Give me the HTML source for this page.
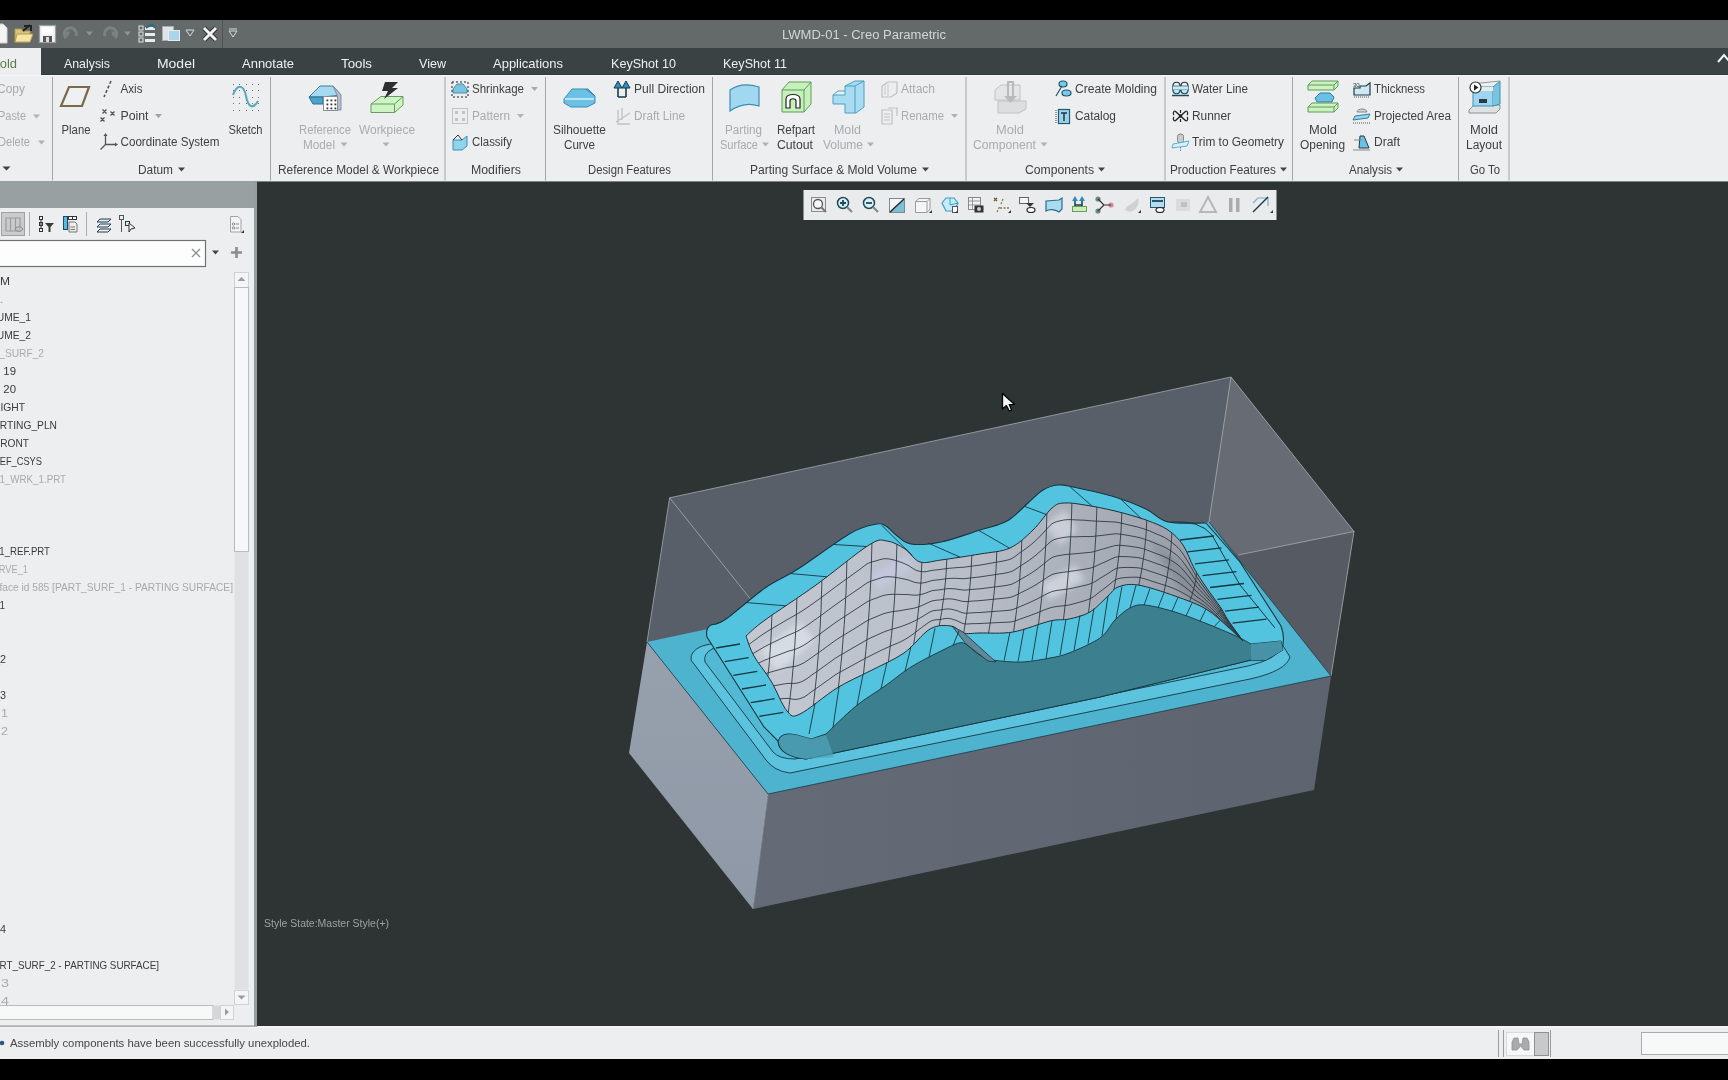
<!DOCTYPE html>
<html><head><meta charset="utf-8"><title>Creo Parametric</title>
<style>
html,body{margin:0;padding:0;background:#000;overflow:hidden;width:1728px;height:1080px}
svg{display:block;will-change:transform}
text{font-family:"Liberation Sans",sans-serif}
</style></head><body>
<svg width="1728" height="1080" viewBox="0 0 1728 1080">
<rect x="0" y="0" width="1728" height="1080" fill="#000" />
<rect x="0" y="20" width="1728" height="28" fill="#646a6a" />
<rect x="0" y="48" width="1728" height="27" fill="#3a4243" />
<rect x="0" y="75" width="1728" height="106" fill="#eceef0" />
<rect x="0" y="74" width="1728" height="1" fill="#323a3b" />
<rect x="0" y="75" width="1728" height="1" fill="#f3f6f6" />
<rect x="257" y="181" width="1471" height="845" fill="#2e3434" />
<rect x="0" y="181" width="1728" height="1" fill="#7d8484" />
<rect x="0" y="181" width="254" height="27" fill="#98a0a1" />
<rect x="0" y="208" width="254" height="818" fill="#eceef0" />
<rect x="254" y="181" width="3" height="845" fill="#969d9e" />
<rect x="0" y="1026" width="1728" height="33" fill="#eceef0" />
<rect x="0" y="1026" width="1728" height="2" fill="#f2f6f6" />
<rect x="0" y="1025.5" width="257" height="1.2" fill="#8d9393" />
<text x="864" y="38.5" font-size="12.5" fill="#d2d6d6" text-anchor="middle" textLength="164" lengthAdjust="spacingAndGlyphs" >LWMD-01 - Creo Parametric</text>
<path d="M-6,24 L3,24 L7,28 L7,43 L-6,43 Z" fill="#f4f4f4" stroke="#cfd2d2" stroke-width="1" />
<path d="M15,29 L21,29 L23,31 L30,31 L30,42 L15,42 Z" fill="#d9c27a" stroke="#b59a4a" stroke-width="1" />
<path d="M17,34 L33,34 L30,42 L15,42 Z" fill="#f3e4a8" stroke="#b59a4a" stroke-width="1" />
<path d="M24,26 L31,26 L31,31" fill="none" stroke="#222" stroke-width="2" />
<path d="M23,31 L30,25" fill="none" stroke="#222" stroke-width="2" />
<rect x="39.5" y="25.5" width="16" height="17" fill="#f2f2f2" stroke="#9a9e9e" stroke-width="1.2"/>
<rect x="42" y="27" width="11" height="7" fill="#ffffff" />
<rect x="43" y="36" width="9" height="6" fill="#555" />
<rect x="46" y="37" width="3" height="5" fill="#ddd" />
<path d="M66,38 A6,6 0 1 1 76,36" fill="none" stroke="#7c8282" stroke-width="3" />
<polygon points="64,33 70,31 68,37" fill="#7c8282" stroke="none" stroke-width="1" />
<polygon points="86.0,31.5 93.0,31.5 89.5,35.5" fill="#8d9393" stroke="none" stroke-width="1" />
<path d="M115,38 A6,6 0 1 0 105,36" fill="none" stroke="#7c8282" stroke-width="3" />
<polygon points="117,33 111,31 113,37" fill="#7c8282" stroke="none" stroke-width="1" />
<polygon points="124.0,31.5 131.0,31.5 127.5,35.5" fill="#8d9393" stroke="none" stroke-width="1" />
<rect x="139" y="26" width="4" height="4" fill="none" stroke="#e0e4e4" stroke-width="1"/>
<rect x="145" y="27" width="10" height="3" fill="#e8ecec" />
<rect x="139" y="32" width="4" height="4" fill="none" stroke="#e0e4e4" stroke-width="1"/>
<rect x="145" y="33" width="10" height="3" fill="#e8ecec" />
<rect x="139" y="38" width="4" height="4" fill="none" stroke="#e0e4e4" stroke-width="1"/>
<rect x="145" y="39" width="10" height="3" fill="#e8ecec" />
<path d="M146,28 L152,24 M152,24 L155,28" fill="none" stroke="#1e6d8c" stroke-width="2" />
<rect x="162.5" y="26.5" width="11" height="14" fill="#e0e4e4" stroke="#aab0b0"/>
<rect x="168.5" y="30.5" width="11" height="10" fill="#a9d6ea" stroke="#e8ecec"/>
<polygon points="186,30 194,30 190,36" fill="none" stroke="#d5dada" stroke-width="1" />
<path d="M204,28 L216,40 M216,28 L204,40" fill="none" stroke="#333" stroke-width="5" />
<path d="M204,28 L216,40 M216,28 L204,40" fill="none" stroke="#f4f4f4" stroke-width="3" />
<line x1="222.5" y1="20" x2="222.5" y2="48" stroke="#4e5454" stroke-width="1" />
<polygon points="229,31 237,31 233,37" fill="none" stroke="#d5dada" stroke-width="1" />
<line x1="229" y1="29" x2="237" y2="29" stroke="#d5dada" stroke-width="1" />
<rect x="0" y="48" width="41" height="27" fill="#eceef0" />
<text x="-11" y="67.5" font-size="13" fill="#5b7d47" text-anchor="start" textLength="28" lengthAdjust="spacingAndGlyphs" >Mold</text>
<text x="64" y="67.5" font-size="13" fill="#eef0f0" text-anchor="start" textLength="46" lengthAdjust="spacingAndGlyphs" >Analysis</text>
<text x="157" y="67.5" font-size="13" fill="#eef0f0" text-anchor="start" textLength="38" lengthAdjust="spacingAndGlyphs" >Model</text>
<text x="242" y="67.5" font-size="13" fill="#eef0f0" text-anchor="start" textLength="52" lengthAdjust="spacingAndGlyphs" >Annotate</text>
<text x="341" y="67.5" font-size="13" fill="#eef0f0" text-anchor="start" textLength="31" lengthAdjust="spacingAndGlyphs" >Tools</text>
<text x="419" y="67.5" font-size="13" fill="#eef0f0" text-anchor="start" textLength="27" lengthAdjust="spacingAndGlyphs" >View</text>
<text x="493" y="67.5" font-size="13" fill="#eef0f0" text-anchor="start" textLength="70" lengthAdjust="spacingAndGlyphs" >Applications</text>
<text x="611" y="67.5" font-size="13" fill="#eef0f0" text-anchor="start" textLength="65" lengthAdjust="spacingAndGlyphs" >KeyShot 10</text>
<text x="723" y="67.5" font-size="13" fill="#eef0f0" text-anchor="start" textLength="64" lengthAdjust="spacingAndGlyphs" >KeyShot 11</text>
<path d="M1718,62 L1724,55 L1730,62" fill="none" stroke="#f4f4f4" stroke-width="2" />
<line x1="52.5" y1="77" x2="52.5" y2="180.5" stroke="#a3a7a8" stroke-width="1" />
<line x1="270.5" y1="77" x2="270.5" y2="180.5" stroke="#a3a7a8" stroke-width="1" />
<line x1="445" y1="77" x2="445" y2="180.5" stroke="#a3a7a8" stroke-width="1" />
<line x1="545.5" y1="77" x2="545.5" y2="180.5" stroke="#a3a7a8" stroke-width="1" />
<line x1="712.5" y1="77" x2="712.5" y2="180.5" stroke="#a3a7a8" stroke-width="1" />
<line x1="966" y1="77" x2="966" y2="180.5" stroke="#a3a7a8" stroke-width="1" />
<line x1="1165" y1="77" x2="1165" y2="180.5" stroke="#a3a7a8" stroke-width="1" />
<line x1="1292.5" y1="77" x2="1292.5" y2="180.5" stroke="#a3a7a8" stroke-width="1" />
<line x1="1458.5" y1="77" x2="1458.5" y2="180.5" stroke="#a3a7a8" stroke-width="1" />
<line x1="1509" y1="77" x2="1509" y2="180.5" stroke="#a3a7a8" stroke-width="1" />
<text x="-3" y="93" font-size="12" fill="#a9abac" text-anchor="start" textLength="28" lengthAdjust="spacingAndGlyphs" >Copy</text>
<text x="-2" y="120" font-size="12" fill="#a9abac" text-anchor="start" textLength="28" lengthAdjust="spacingAndGlyphs" >Paste</text>
<polygon points="33.0,114.5 40.0,114.5 36.5,118.5" fill="#b0b2b3" stroke="none" stroke-width="1" />
<text x="-2" y="146" font-size="12" fill="#a9abac" text-anchor="start" textLength="32" lengthAdjust="spacingAndGlyphs" >Delete</text>
<polygon points="38.0,140.5 45.0,140.5 41.5,144.5" fill="#b0b2b3" stroke="none" stroke-width="1" />
<polygon points="2.5,166.5 10.5,166.5 6.5,170.5" fill="#404040" stroke="none" stroke-width="1" />
<polygon points="69,87 89,87 82,106 61,106" fill="#eef0f3" stroke="#7a6a48" stroke-width="2.2" />
<text x="61.5" y="133.5" font-size="12" fill="#404040" text-anchor="start" textLength="29" lengthAdjust="spacingAndGlyphs" >Plane</text>
<path d="M111,81 L104,97" fill="none" stroke="#555" stroke-width="1.6" stroke-dasharray="3,2"/>
<text x="120.5" y="92.5" font-size="12" fill="#404040" text-anchor="start" textLength="22" lengthAdjust="spacingAndGlyphs" >Axis</text>
<path d="M102.5,109.5 l4,4 m0,-4 l-4,4 M110.5,111.5 l4,4 m0,-4 l-4,4 M100.5,117.5 l4,4 m0,-4 l-4,4" fill="none" stroke="#555" stroke-width="1.3" />
<text x="120.5" y="119.5" font-size="12" fill="#404040" text-anchor="start" textLength="28" lengthAdjust="spacingAndGlyphs" >Point</text>
<polygon points="155.0,114.0 162.0,114.0 158.5,118.0" fill="#9fa1a2" stroke="none" stroke-width="1" />
<path d="M105.5,135 L105.5,144.5 L116,144.5 M105.5,144.5 L100.5,149.5" fill="none" stroke="#555" stroke-width="1.3" />
<polygon points="103.5,136 107.5,136 105.5,133" fill="#555" stroke="none" stroke-width="1" />
<polygon points="115,142.5 115,146.5 118,144.5" fill="#555" stroke="none" stroke-width="1" />
<text x="120.5" y="146" font-size="12" fill="#404040" text-anchor="start" textLength="99" lengthAdjust="spacingAndGlyphs" >Coordinate System</text>
<rect x="233" y="84" width="1" height="1" fill="#707070" />
<rect x="239" y="84" width="1" height="1" fill="#707070" />
<rect x="246" y="84" width="1" height="1" fill="#707070" />
<rect x="252" y="84" width="1" height="1" fill="#707070" />
<rect x="258" y="84" width="1" height="1" fill="#707070" />
<rect x="233" y="90" width="1" height="1" fill="#707070" />
<rect x="239" y="90" width="1" height="1" fill="#707070" />
<rect x="246" y="90" width="1" height="1" fill="#707070" />
<rect x="252" y="90" width="1" height="1" fill="#707070" />
<rect x="258" y="90" width="1" height="1" fill="#707070" />
<rect x="233" y="97" width="1" height="1" fill="#707070" />
<rect x="239" y="97" width="1" height="1" fill="#707070" />
<rect x="246" y="97" width="1" height="1" fill="#707070" />
<rect x="252" y="97" width="1" height="1" fill="#707070" />
<rect x="258" y="97" width="1" height="1" fill="#707070" />
<rect x="233" y="103" width="1" height="1" fill="#707070" />
<rect x="239" y="103" width="1" height="1" fill="#707070" />
<rect x="246" y="103" width="1" height="1" fill="#707070" />
<rect x="252" y="103" width="1" height="1" fill="#707070" />
<rect x="258" y="103" width="1" height="1" fill="#707070" />
<rect x="233" y="110" width="1" height="1" fill="#707070" />
<rect x="239" y="110" width="1" height="1" fill="#707070" />
<rect x="246" y="110" width="1" height="1" fill="#707070" />
<rect x="252" y="110" width="1" height="1" fill="#707070" />
<rect x="258" y="110" width="1" height="1" fill="#707070" />
<path d="M233,95 C238,82 244,86 246,96 C248,107 253,110 258,101" fill="none" stroke="#5aa7b8" stroke-width="2" />
<text x="228.5" y="133.5" font-size="12" fill="#404040" text-anchor="start" textLength="34" lengthAdjust="spacingAndGlyphs" >Sketch</text>
<text x="138" y="173.5" font-size="12" fill="#404040" text-anchor="start" textLength="35" lengthAdjust="spacingAndGlyphs" >Datum</text>
<polygon points="178.0,167.5 185.0,167.5 181.5,171.5" fill="#444" stroke="none" stroke-width="1" />
<path d="M309,97 L320,86 L333,86 L341,95 L323,97 Z" fill="#a6daf0" stroke="#3a7fa0" stroke-width="1" />
<path d="M309,97 L323,97 L323,104 L313,104 Z" fill="#4aa3cc" stroke="#2a6f90" stroke-width="1" />
<path d="M333,86 L341,95 L341,110 L337,110 L337,95 Z" fill="#b9bdd2" stroke="#7a7f99" stroke-width="0.8" />
<rect x="323.5" y="96.5" width="14" height="14" fill="#ffffff" stroke="#8a8f99"/>
<rect x="326.5" y="99.5" width="1.8" height="1.8" fill="#333" />
<rect x="330.5" y="99.5" width="1.8" height="1.8" fill="#333" />
<rect x="334.5" y="99.5" width="1.8" height="1.8" fill="#333" />
<rect x="326.5" y="103.5" width="1.8" height="1.8" fill="#333" />
<rect x="330.5" y="103.5" width="1.8" height="1.8" fill="#333" />
<rect x="334.5" y="103.5" width="1.8" height="1.8" fill="#333" />
<rect x="326.5" y="107.5" width="1.8" height="1.8" fill="#333" />
<rect x="330.5" y="107.5" width="1.8" height="1.8" fill="#333" />
<rect x="334.5" y="107.5" width="1.8" height="1.8" fill="#333" />
<text x="299" y="134" font-size="12" fill="#a9abac" text-anchor="start" textLength="52" lengthAdjust="spacingAndGlyphs" >Reference</text>
<text x="303" y="148.5" font-size="12" fill="#a9abac" text-anchor="start" textLength="32" lengthAdjust="spacingAndGlyphs" >Model</text>
<polygon points="340.5,142.5 347.5,142.5 344,146.5" fill="#b0b2b3" stroke="none" stroke-width="1" />
<path d="M371,104 L381,96.5 L403,96.5 L403,105 L394.5,112.5 L371,112.5 Z" fill="#cdf5c4" stroke="#6a9a60" stroke-width="1" />
<path d="M371,104 L394.5,104 L403,96.5 M394.5,104 L394.5,112.5" fill="none" stroke="#6a9a60" stroke-width="1" />
<polygon points="385,82 398,82 392,88 398,88 384,99 388,91 382,91" fill="#2e2e2e" stroke="none" stroke-width="1" />
<text x="359" y="134" font-size="12" fill="#a9abac" text-anchor="start" textLength="56" lengthAdjust="spacingAndGlyphs" >Workpiece</text>
<polygon points="382.5,142.5 389.5,142.5 386,146.5" fill="#b0b2b3" stroke="none" stroke-width="1" />
<text x="278" y="173.5" font-size="12" fill="#404040" text-anchor="start" textLength="161" lengthAdjust="spacingAndGlyphs" >Reference Model &amp; Workpiece</text>
<path d="M453,89 L457,84 L463,84 L467,89 L467,93 L453,93 Z" fill="#7cc3e0" stroke="#4a8fb0" stroke-width="1" />
<path d="M452,82 L452,97 L468,97 L468,82 Z" fill="none" stroke="#222" stroke-width="1" stroke-dasharray="2,2"/>
<text x="472" y="93" font-size="12" fill="#404040" text-anchor="start" textLength="52" lengthAdjust="spacingAndGlyphs" >Shrinkage</text>
<polygon points="531.0,87.0 538.0,87.0 534.5,91.0" fill="#a8aaab" stroke="none" stroke-width="1" />
<rect x="452.5" y="108.5" width="15" height="15" fill="none" stroke="#c0c2c3"/>
<rect x="455" y="111" width="3" height="3" fill="#c0c2c3" />
<rect x="462" y="111" width="3" height="3" fill="#c0c2c3" />
<rect x="455" y="118" width="3" height="3" fill="#c0c2c3" />
<rect x="462" y="118" width="3" height="3" fill="#c0c2c3" />
<text x="472" y="120" font-size="12" fill="#a9abac" text-anchor="start" textLength="38" lengthAdjust="spacingAndGlyphs" >Pattern</text>
<polygon points="517.0,114.0 524.0,114.0 520.5,118.0" fill="#b0b2b3" stroke="none" stroke-width="1" />
<path d="M453,140 L462,140 L467,136 L467,146 L462,150 L453,150 Z" fill="#8fd3ec" stroke="#3a8fb0" stroke-width="1" />
<path d="M453,140 L458,135 L462,140" fill="none" stroke="#333" stroke-width="1" />
<text x="472" y="146" font-size="12" fill="#404040" text-anchor="start" textLength="40" lengthAdjust="spacingAndGlyphs" >Classify</text>
<text x="471" y="173.5" font-size="12" fill="#404040" text-anchor="start" textLength="50" lengthAdjust="spacingAndGlyphs" >Modifiers</text>
<path d="M564,99 L572,89 L588,89 L595,96 L595,103 L587,107 L571,107 L564,103 Z" fill="#6cc0e3" stroke="#3a8fb5" stroke-width="1" />
<path d="M565,99 L594,99" fill="none" stroke="#b9e4f5" stroke-width="2" />
<path d="M586,89 L595,96" fill="none" stroke="#2a7fa5" stroke-width="1" />
<text x="553" y="134" font-size="12" fill="#404040" text-anchor="start" textLength="53" lengthAdjust="spacingAndGlyphs" >Silhouette</text>
<text x="564" y="148.5" font-size="12" fill="#404040" text-anchor="start" textLength="31" lengthAdjust="spacingAndGlyphs" >Curve</text>
<path d="M618,97 L618,84 M626,97 L626,84 M618,97 L626,97" fill="none" stroke="#1a3a4a" stroke-width="1.6" />
<polygon points="614,88 618,81 622,88" fill="#2a90c0" stroke="#1a3a4a" stroke-width="1" />
<polygon points="622,88 626,81 630,88" fill="#2a90c0" stroke="#1a3a4a" stroke-width="1" />
<text x="634" y="93" font-size="12" fill="#404040" text-anchor="start" textLength="71" lengthAdjust="spacingAndGlyphs" >Pull Direction</text>
<path d="M616,122 L630,113 M618,110 L618,124 L630,124 M622,108 L622,120" fill="none" stroke="#bfc1c2" stroke-width="1.3" />
<text x="634" y="120" font-size="12" fill="#a9abac" text-anchor="start" textLength="51" lengthAdjust="spacingAndGlyphs" >Draft Line</text>
<text x="588" y="173.5" font-size="12" fill="#404040" text-anchor="start" textLength="83" lengthAdjust="spacingAndGlyphs" >Design Features</text>
<path d="M730,90 C740,83 750,84 759,87 L759,106 C750,103 740,104 730,111 Z" fill="#9fd8ef" stroke="#3d8fb5" stroke-width="1.2" />
<text x="725" y="134" font-size="12" fill="#a9abac" text-anchor="start" textLength="37" lengthAdjust="spacingAndGlyphs" >Parting</text>
<text x="720" y="148.5" font-size="12" fill="#a9abac" text-anchor="start" textLength="38" lengthAdjust="spacingAndGlyphs" >Surface</text>
<polygon points="762.0,142.5 769.0,142.5 765.5,146.5" fill="#b0b2b3" stroke="none" stroke-width="1" />
<path d="M782,90 L789,82 L811,82 L811,104 L804,112 L782,112 Z" fill="#c6f0bc" stroke="#5f9a58" stroke-width="1" />
<path d="M782,90 L804,90 L811,82 M804,90 L804,112" fill="none" stroke="#5f9a58" stroke-width="1" />
<path d="M786,108 L786,99 C786,93 800,93 800,99 L800,108 L796,108 L796,101 C796,98 790,98 790,101 L790,108 Z" fill="#ffffff" stroke="#222" stroke-width="1.2" />
<text x="777" y="134" font-size="12" fill="#404040" text-anchor="start" textLength="38" lengthAdjust="spacingAndGlyphs" >Refpart</text>
<text x="777" y="148.5" font-size="12" fill="#404040" text-anchor="start" textLength="36" lengthAdjust="spacingAndGlyphs" >Cutout</text>
<path d="M833,95 L845,95 L845,86 L855,81 L864,81 L864,107 L856,113 L845,113 L845,104 L833,104 Z" fill="#a9dcf0" stroke="#4a9fc5" stroke-width="1" />
<path d="M833,95 L838,91 L845,91 M845,86 L855,86 L864,81 M855,86 L855,113" fill="none" stroke="#4a9fc5" stroke-width="1" />
<text x="834" y="134" font-size="12" fill="#a9abac" text-anchor="start" textLength="27" lengthAdjust="spacingAndGlyphs" >Mold</text>
<text x="823" y="148.5" font-size="12" fill="#a9abac" text-anchor="start" textLength="40" lengthAdjust="spacingAndGlyphs" >Volume</text>
<polygon points="867.0,142.5 874.0,142.5 870.5,146.5" fill="#b0b2b3" stroke="none" stroke-width="1" />
<path d="M882,86 L888,82 L897,82 L897,93 L891,97 L882,97 Z" fill="none" stroke="#bfc1c2" stroke-width="1.2" />
<path d="M885,84 L885,95 M888,84 L888,96" fill="none" stroke="#c9cbcc" stroke-width="1" />
<text x="901" y="93" font-size="12" fill="#a9abac" text-anchor="start" textLength="34" lengthAdjust="spacingAndGlyphs" >Attach</text>
<path d="M882,110 L892,110 L892,124 L882,124 Z M884,114 L890,114 M884,117 L890,117 M884,120 L890,120 M888,108 L897,108 L897,116" fill="none" stroke="#bfc1c2" stroke-width="1.2" />
<text x="901" y="120" font-size="12" fill="#a9abac" text-anchor="start" textLength="43" lengthAdjust="spacingAndGlyphs" >Rename</text>
<polygon points="951.0,114.0 958.0,114.0 954.5,118.0" fill="#b0b2b3" stroke="none" stroke-width="1" />
<text x="750" y="173.5" font-size="12" fill="#404040" text-anchor="start" textLength="167" lengthAdjust="spacingAndGlyphs" >Parting Surface &amp; Mold Volume</text>
<polygon points="922.0,167.5 929.0,167.5 925.5,171.5" fill="#444" stroke="none" stroke-width="1" />
<path d="M995,90 L1001,85 L1020,85 L1020,100 L995,100 Z" fill="#e3e5e6" stroke="#bfc1c2" stroke-width="1" />
<path d="M998,101 L1026,101 L1026,109 L1019,113 L998,113 Z" fill="#dcdedf" stroke="#bfc1c2" stroke-width="1" />
<path d="M1008,97 L1008,82 L1013,82 L1013,97" fill="none" stroke="#b8babb" stroke-width="2" />
<polygon points="1004,96 1017,96 1010.5,103" fill="#b8babb" stroke="none" stroke-width="1" />
<text x="996" y="134" font-size="12" fill="#a9abac" text-anchor="start" textLength="28" lengthAdjust="spacingAndGlyphs" >Mold</text>
<text x="973" y="148.5" font-size="12" fill="#a9abac" text-anchor="start" textLength="63" lengthAdjust="spacingAndGlyphs" >Component</text>
<polygon points="1040.5,142.5 1047.5,142.5 1044,146.5" fill="#b0b2b3" stroke="none" stroke-width="1" />
<path d="M1056,96 L1062,86 M1059,84 C1059,80 1067,80 1067,84 C1067,88 1059,88 1059,84 Z M1062,93 C1062,89 1071,89 1071,93 C1071,97 1062,97 1062,93 Z" fill="#7cc8e6" stroke="#1a5570" stroke-width="1.2" />
<text x="1075" y="93" font-size="12" fill="#404040" text-anchor="start" textLength="82" lengthAdjust="spacingAndGlyphs" >Create Molding</text>
<rect x="1058.5" y="109.5" width="11" height="14" fill="#9fd3ea" stroke="#1f5a78" stroke-width="1.2"/>
<path d="M1061,113 L1067,113 M1064,113 L1064,121" fill="none" stroke="#1f3a4a" stroke-width="1.5" />
<path d="M1056,110 L1056,124" fill="none" stroke="#444" stroke-width="1" stroke-dasharray="1,1"/>
<text x="1075" y="120" font-size="12" fill="#404040" text-anchor="start" textLength="41" lengthAdjust="spacingAndGlyphs" >Catalog</text>
<text x="1025" y="173.5" font-size="12" fill="#404040" text-anchor="start" textLength="69" lengthAdjust="spacingAndGlyphs" >Components</text>
<polygon points="1098.0,167.5 1105.0,167.5 1101.5,171.5" fill="#444" stroke="none" stroke-width="1" />
<path d="M1173,86 C1173,81 1180,81 1180,86 M1181,86 C1181,81 1188,81 1188,86" fill="none" stroke="#333" stroke-width="1.2" />
<rect x="1172.5" y="86" width="16" height="4" fill="#cfe9f3" stroke="#2a6f8f" stroke-width="0.8"/>
<path d="M1173,90 C1173,95 1180,95 1180,90 M1181,90 C1181,95 1188,95 1188,90" fill="#bfe3f0" stroke="#1f4a5a" stroke-width="1.2" />
<line x1="1172" y1="95.5" x2="1189" y2="95.5" stroke="#1f4a5a" stroke-width="1.5" />
<text x="1192" y="93" font-size="12" fill="#404040" text-anchor="start" textLength="56" lengthAdjust="spacingAndGlyphs" >Water Line</text>
<path d="M1175,111 L1186,121 M1186,111 L1175,121" fill="none" stroke="#222" stroke-width="1.4" />
<path d="M1175,111 C1173,111 1173,114 1174,115 M1186,111 C1188,111 1188,114 1187,115 M1175,121 C1173,121 1173,118 1174,117 M1186,121 C1188,121 1188,118 1187,117 M1180.5,110 L1180.5,113 M1180.5,119 L1180.5,122" fill="none" stroke="#222" stroke-width="1.2" />
<circle cx="1180.5" cy="116" r="1.8" fill="#222"/>
<text x="1192" y="120" font-size="12" fill="#404040" text-anchor="start" textLength="39" lengthAdjust="spacingAndGlyphs" >Runner</text>
<rect x="1177.5" y="134" width="6" height="9" rx="2.5" fill="#c9cbcc" stroke="#6f7475" stroke-width="0.8"/>
<path d="M1173,144 L1189,141 L1187,146 L1172,148 Z" fill="#d9eef6" stroke="#3a9fd0" stroke-width="0.8" />
<path d="M1180.5,147 L1180.5,152" fill="none" stroke="#3a9fd0" stroke-width="1" stroke-dasharray="1.5,1"/>
<text x="1192" y="146" font-size="12" fill="#404040" text-anchor="start" textLength="92" lengthAdjust="spacingAndGlyphs" >Trim to Geometry</text>
<text x="1170" y="173.5" font-size="12" fill="#404040" text-anchor="start" textLength="106" lengthAdjust="spacingAndGlyphs" >Production Features</text>
<polygon points="1280.0,167.5 1287.0,167.5 1283.5,171.5" fill="#444" stroke="none" stroke-width="1" />
<path d="M1308,85 L1312,81 L1338,81 L1338,86 L1334,90 L1308,90 Z" fill="#cdf2c2" stroke="#5f9a58" stroke-width="1" />
<path d="M1308,85 L1334,85 L1338,81 M1334,85 L1334,90" fill="none" stroke="#5f9a58" stroke-width="1" />
<path d="M1315,98 L1320,93 L1330,93 L1334,97 L1332,102 L1317,102 Z" fill="#6cc0e3" stroke="#2a7fa5" stroke-width="1" />
<path d="M1308,107 L1312,103 L1338,103 L1338,108 L1334,112 L1308,112 Z" fill="#cdf2c2" stroke="#5f9a58" stroke-width="1" />
<path d="M1308,107 L1334,107 L1338,103 M1334,107 L1334,112" fill="none" stroke="#5f9a58" stroke-width="1" />
<text x="1309" y="134" font-size="12" fill="#404040" text-anchor="start" textLength="28" lengthAdjust="spacingAndGlyphs" >Mold</text>
<text x="1300" y="148.5" font-size="12" fill="#404040" text-anchor="start" textLength="45" lengthAdjust="spacingAndGlyphs" >Opening</text>
<path d="M1354,88 L1354,95 L1370,95 L1370,83 L1366,86 L1360,86 L1360,88 Z" fill="#cfe9f3" stroke="#1f3a4a" stroke-width="1.2" />
<text x="1353" y="87" font-size="6" fill="#1f3a4a" text-anchor="start" >30</text>
<path d="M1354,97 L1370,97" fill="none" stroke="#555" stroke-width="1" stroke-dasharray="1,1"/>
<text x="1374" y="93" font-size="12" fill="#404040" text-anchor="start" textLength="51" lengthAdjust="spacingAndGlyphs" >Thickness</text>
<path d="M1357,112 C1357,108 1367,108 1367,112 Z" fill="#d0d2d3" stroke="#888" stroke-width="1" />
<path d="M1355,116 L1370,114 L1368,118 L1353,120 Z" fill="#9fd3ea" stroke="#2a7fa5" stroke-width="1" />
<path d="M1353,123 L1370,123" fill="none" stroke="#555" stroke-width="1" stroke-dasharray="1,1"/>
<text x="1374" y="120" font-size="12" fill="#404040" text-anchor="start" textLength="77" lengthAdjust="spacingAndGlyphs" >Projected Area</text>
<path d="M1360,136 L1364,136 L1369,148 L1359,148 Z" fill="#6cc0e3" stroke="#1f3a4a" stroke-width="1" />
<path d="M1354,140 L1362,140 M1353,150 L1370,150" fill="none" stroke="#888" stroke-width="1" />
<text x="1374" y="146" font-size="12" fill="#404040" text-anchor="start" textLength="26" lengthAdjust="spacingAndGlyphs" >Draft</text>
<text x="1349" y="173.5" font-size="12" fill="#404040" text-anchor="start" textLength="43" lengthAdjust="spacingAndGlyphs" >Analysis</text>
<polygon points="1396.0,167.5 1403.0,167.5 1399.5,171.5" fill="#444" stroke="none" stroke-width="1" />
<path d="M1469,110 L1474,105 L1500,105 L1500,109 L1496,113 L1469,113 Z" fill="#dfe2e3" stroke="#8a8f90" stroke-width="1" />
<rect x="1473" y="87" width="20" height="19" fill="#9fd6ef" stroke="#3a8fb5"/>
<rect x="1473" y="87" width="20" height="4" fill="#e8eaeb" />
<path d="M1493,87 L1500,81 L1500,104 L1493,106" fill="#7cc3e0" stroke="#3a8fb5" stroke-width="1" />
<rect x="1479" y="99" width="8" height="4" fill="#2a3a4a" />
<path d="M1474,83 L1481,83 L1500,81" fill="none" stroke="#999" stroke-width="1" />
<circle cx="1475.5" cy="87.5" r="5.5" fill="#fff" stroke="#333" stroke-width="1.2"/>
<polygon points="1474,84.5 1474,90.5 1478.5,87.5" fill="#222" stroke="none" stroke-width="1" />
<text x="1470" y="134" font-size="12" fill="#404040" text-anchor="start" textLength="28" lengthAdjust="spacingAndGlyphs" >Mold</text>
<text x="1466" y="148.5" font-size="12" fill="#404040" text-anchor="start" textLength="36" lengthAdjust="spacingAndGlyphs" >Layout</text>
<text x="1470" y="173.5" font-size="12" fill="#404040" text-anchor="start" textLength="30" lengthAdjust="spacingAndGlyphs" >Go To</text>
<rect x="1.5" y="212.5" width="23" height="23" fill="#c9cbcc" stroke="#9fa2a3"/>
<path d="M6,218 L20,218 L20,231 L6,231 Z M10.5,218 L10.5,231 M15.5,218 L15.5,231" fill="none" stroke="#9a9c9d" stroke-width="1.2" />
<path d="M15,229 C17,226 21,226 23,229 C21,232 17,232 15,229 Z" fill="#bfc1c2" stroke="#8a8c8d" stroke-width="1" />
<line x1="29.5" y1="212" x2="29.5" y2="236" stroke="#a9acad" stroke-width="1" />
<rect x="39.5" y="216.5" width="3" height="3" fill="none" stroke="#333" stroke-width="1"/>
<rect x="39.5" y="222.5" width="3" height="3" fill="none" stroke="#333" stroke-width="1"/>
<rect x="39.5" y="228.5" width="3" height="3" fill="none" stroke="#333" stroke-width="1"/>
<line x1="41" y1="220" x2="41" y2="228" stroke="#333" stroke-width="1" />
<polygon points="45,223 54,223 50.5,227 50.5,232 48.5,232 48.5,227" fill="#3a3a3a" stroke="none" stroke-width="1" />
<rect x="63.5" y="216.5" width="4" height="13" fill="#5ab9de" stroke="#1f4a60"/>
<rect x="68.5" y="216.5" width="4" height="3" fill="#fff" stroke="#333"/>
<rect x="72.5" y="216.5" width="4" height="3" fill="#fff" stroke="#333"/>
<path d="M69,222 L75,222 L77,224 L77,232 L69,232 Z" fill="#eee" stroke="#777" stroke-width="1" />
<line x1="70.5" y1="227" x2="75" y2="227" stroke="#777" stroke-width="1" />
<line x1="70.5" y1="229.5" x2="75" y2="229.5" stroke="#777" stroke-width="1" />
<line x1="86.5" y1="212" x2="86.5" y2="236" stroke="#a9acad" stroke-width="1" />
<path d="M97,222 L100,219 L111,219 L108,222 Z" fill="#d8eef5" stroke="#1f3a4a" stroke-width="1" />
<path d="M97,227 L100,224 L111,224 L108,227 Z" fill="#f2f2f2" stroke="#1f3a4a" stroke-width="1" />
<path d="M97,232 L100,229 L111,229 L108,232 Z" fill="#f2f2f2" stroke="#1f3a4a" stroke-width="1" />
<rect x="119.5" y="215.5" width="4" height="4" fill="none" stroke="#555"/>
<line x1="121.5" y1="220" x2="121.5" y2="232" stroke="#555" stroke-width="1" />
<rect x="125.5" y="221.5" width="4" height="4" fill="#d8eef5" stroke="#1f3a4a"/>
<polygon points="129,223 135,228 131,229 129,232" fill="#f4f4f4" stroke="#333" stroke-width="1" />
<path d="M230.5,216.5 L238,216.5 L241,219.5 L241,232 L230.5,232 Z" fill="#f4f4f4" stroke="#a0a2a3" stroke-width="1" />
<circle cx="233.5" cy="224" r="1.2" fill="none" stroke="#777" stroke-width="0.8"/>
<circle cx="233.5" cy="228" r="1.2" fill="none" stroke="#777" stroke-width="0.8"/>
<line x1="235.5" y1="224" x2="239" y2="224" stroke="#888" stroke-width="1" />
<line x1="235.5" y1="228" x2="239" y2="228" stroke="#888" stroke-width="1" />
<polygon points="241,233 244,230 244,233" fill="#333" stroke="none" stroke-width="1" />
<rect x="-1" y="240.5" width="206.5" height="26" fill="#fdfdfd" stroke="#707272" stroke-width="1.2"/>
<path d="M192,249 L200,257 M200,249 L192,257" fill="none" stroke="#8a8c8d" stroke-width="1.3" />
<polygon points="212.0,250.5 219.0,250.5 215.5,254.5" fill="#444" stroke="none" stroke-width="1" />
<path d="M236.5,247 L236.5,258 M231,252.5 L242,252.5" fill="none" stroke="#8a8c8d" stroke-width="2.6" />
<rect x="234.5" y="272.5" width="14" height="717" fill="#dfe1e2" />
<rect x="234.5" y="272.5" width="14" height="15" fill="#f4f5f6" stroke="#cfd1d2"/>
<polygon points="237.5,281 245.5,281 241.5,277" fill="#9a9c9d" stroke="none" stroke-width="1" />
<rect x="234.5" y="287.5" width="14" height="264" fill="#f5f7f8" stroke="#b9bcbd"/>
<rect x="234.5" y="990.5" width="14" height="14" fill="#f4f5f6" stroke="#cfd1d2"/>
<polygon points="237.5,995.5 245.5,995.5 241.5,999.5" fill="#9a9c9d" stroke="none" stroke-width="1" />
<rect x="-1" y="1005.5" width="214" height="14" fill="#f7f8f8" stroke="#b9bcbd"/>
<rect x="213" y="1005.5" width="7" height="14" fill="#d5d8d9" />
<rect x="220.5" y="1005.5" width="13" height="14" fill="#f4f5f6" stroke="#d0d2d3"/>
<polygon points="225,1008.5 225,1015.5 229,1012" fill="#9a9c9d" stroke="none" stroke-width="1" />
<text x="-8" y="285" font-size="10.5" fill="#3a3a3a" text-anchor="start" textLength="18" lengthAdjust="spacingAndGlyphs" >AM</text>
<text x="-1" y="303" font-size="10.5" fill="#a8aaab" text-anchor="start" textLength="5" lengthAdjust="spacingAndGlyphs" >.</text>
<text x="-9" y="321" font-size="10.5" fill="#3a3a3a" text-anchor="start" textLength="40" lengthAdjust="spacingAndGlyphs" >LUME_1</text>
<text x="-9" y="339" font-size="10.5" fill="#3a3a3a" text-anchor="start" textLength="40" lengthAdjust="spacingAndGlyphs" >LUME_2</text>
<text x="-7" y="357" font-size="10.5" fill="#a8aaab" text-anchor="start" textLength="51" lengthAdjust="spacingAndGlyphs" >T_SURF_2</text>
<text x="-3" y="375" font-size="10.5" fill="#3a3a3a" text-anchor="start" textLength="19" lengthAdjust="spacingAndGlyphs" >: 19</text>
<text x="-3" y="393" font-size="10.5" fill="#3a3a3a" text-anchor="start" textLength="19" lengthAdjust="spacingAndGlyphs" >: 20</text>
<text x="-7" y="411" font-size="10.5" fill="#3a3a3a" text-anchor="start" textLength="32" lengthAdjust="spacingAndGlyphs" >RIGHT</text>
<text x="-7" y="429" font-size="10.5" fill="#3a3a3a" text-anchor="start" textLength="64" lengthAdjust="spacingAndGlyphs" >ARTING_PLN</text>
<text x="-6" y="447" font-size="10.5" fill="#3a3a3a" text-anchor="start" textLength="35" lengthAdjust="spacingAndGlyphs" >FRONT</text>
<text x="-7" y="465" font-size="10.5" fill="#3a3a3a" text-anchor="start" textLength="49" lengthAdjust="spacingAndGlyphs" >REF_CSYS</text>
<text x="-6" y="483" font-size="10.5" fill="#a8aaab" text-anchor="start" textLength="72" lengthAdjust="spacingAndGlyphs" >01_WRK_1.PRT</text>
<text x="-6" y="555" font-size="10.5" fill="#3a3a3a" text-anchor="start" textLength="56" lengthAdjust="spacingAndGlyphs" >01_REF.PRT</text>
<text x="-8" y="573" font-size="10.5" fill="#a8aaab" text-anchor="start" textLength="36" lengthAdjust="spacingAndGlyphs" >URVE_1</text>
<text x="-4" y="591" font-size="10.5" fill="#a8aaab" text-anchor="start" textLength="237" lengthAdjust="spacingAndGlyphs" >rface id 585 [PART_SURF_1 - PARTING SURFACE]</text>
<text x="-6" y="609" font-size="10.5" fill="#3a3a3a" text-anchor="start" textLength="11" lengthAdjust="spacingAndGlyphs" >_1</text>
<text x="-6" y="663" font-size="10.5" fill="#3a3a3a" text-anchor="start" textLength="12" lengthAdjust="spacingAndGlyphs" >_2</text>
<text x="-6" y="699" font-size="10.5" fill="#3a3a3a" text-anchor="start" textLength="12" lengthAdjust="spacingAndGlyphs" >_3</text>
<text x="1" y="717" font-size="10.5" fill="#a8aaab" text-anchor="start" textLength="7" lengthAdjust="spacingAndGlyphs" > 1</text>
<text x="1" y="735" font-size="10.5" fill="#a8aaab" text-anchor="start" textLength="7" lengthAdjust="spacingAndGlyphs" > 2</text>
<text x="-6" y="933" font-size="10.5" fill="#3a3a3a" text-anchor="start" textLength="12" lengthAdjust="spacingAndGlyphs" >_4</text>
<text x="-7" y="969" font-size="10.5" fill="#3a3a3a" text-anchor="start" textLength="166" lengthAdjust="spacingAndGlyphs" >ART_SURF_2 - PARTING SURFACE]</text>
<text x="1" y="987" font-size="10.5" fill="#a8aaab" text-anchor="start" textLength="8" lengthAdjust="spacingAndGlyphs" > 3</text>
<text x="1" y="1005" font-size="10.5" fill="#a8aaab" text-anchor="start" textLength="8" lengthAdjust="spacingAndGlyphs" > 4</text>
<circle cx="2" cy="1043" r="2.3" fill="#2a5a75"/>
<text x="10" y="1047" font-size="11" fill="#464646" text-anchor="start" textLength="300" lengthAdjust="spacingAndGlyphs" >Assembly components have been successfully unexploded.</text>
<line x1="1498.5" y1="1030" x2="1498.5" y2="1057" stroke="#9a9c9d" stroke-width="1" />
<line x1="1503.5" y1="1030" x2="1503.5" y2="1057" stroke="#9a9c9d" stroke-width="1" />
<line x1="1550.5" y1="1030" x2="1550.5" y2="1057" stroke="#9a9c9d" stroke-width="1" />
<rect x="1506.5" y="1032.5" width="42" height="23" fill="#f6f7f7" stroke="#d9dbdc"/>
<rect x="1534.5" y="1032.5" width="14" height="23" fill="#c8c9ca" stroke="#8f9192"/>
<path d="M1512,1050 L1512,1042 L1514,1038 L1518,1038 L1519,1044 L1522,1044 L1523,1038 L1527,1038 L1529,1042 L1529,1050 L1524,1050 L1520.5,1046 L1517,1050 Z" fill="#a9abac" stroke="#8f9192" stroke-width="0.8" />
<rect x="1641.5" y="1032.5" width="90" height="22" fill="#f7f8f8" stroke="#a9abac"/>
<text x="264" y="927" font-size="10" fill="#9ba2a2" text-anchor="start" textLength="125" lengthAdjust="spacingAndGlyphs" >Style State:Master Style(+)</text>
<rect x="803.5" y="190" width="473" height="30" fill="#e9ebec" />
<rect x="811.5" y="197.5" width="14" height="14" fill="none" stroke="#8a8c8d"/>
<circle cx="818" cy="204" r="4.5" fill="#f6f8f8" stroke="#555" stroke-width="1.3"/>
<line x1="821" y1="207" x2="826" y2="212" stroke="#777" stroke-width="2" />
<circle cx="843" cy="203" r="5.5" fill="#d8f0f8" stroke="#1f4a5a" stroke-width="1.5"/>
<path d="M840,203 L846,203 M843,200 L843,206" fill="none" stroke="#1f4a5a" stroke-width="1.8" />
<line x1="847" y1="207" x2="852" y2="212" stroke="#888" stroke-width="2.2" />
<circle cx="869" cy="203" r="5.5" fill="#d8f0f8" stroke="#1f4a5a" stroke-width="1.5"/>
<path d="M866,203 L872,203" fill="none" stroke="#1f4a5a" stroke-width="1.8" />
<line x1="873" y1="207" x2="878" y2="212" stroke="#888" stroke-width="2.2" />
<rect x="889.5" y="198.5" width="15" height="14" fill="#f4f6f7" stroke="#7a8a90"/>
<polygon points="890,212 904,199 904,212" fill="#7cc0d8" stroke="none" stroke-width="1" />
<line x1="890" y1="212" x2="904" y2="199" stroke="#222" stroke-width="1.3" />
<path d="M915.5,201.5 L919,198.5 L930,198.5 L930,209 L927,212.5 L915.5,212.5 Z" fill="#f4f5f6" stroke="#9a9c9d" stroke-width="1" />
<path d="M915.5,201.5 L927,201.5 L930,198.5 M927,201.5 L927,212.5" fill="none" stroke="#9a9c9d" stroke-width="1" />
<polygon points="929,213 932,210 932,213" fill="#333" stroke="none" stroke-width="1" />
<path d="M942,203 L946,198 L954,198 L958,203 L954,211 L946,211 Z" fill="#c8ecf7" stroke="#3a9fc5" stroke-width="1.2" />
<path d="M950,198 L950,205 L958,203" fill="none" stroke="#3a9fc5" stroke-width="1" />
<rect x="952.5" y="206.5" width="5" height="6" fill="#fff" stroke="#555"/>
<polygon points="955,213 958,210 958,213" fill="#333" stroke="none" stroke-width="1" />
<rect x="968.5" y="197.5" width="12" height="12" fill="#f2f2f2" stroke="#888"/>
<line x1="969" y1="201" x2="980" y2="201" stroke="#999" stroke-width="1" />
<line x1="969" y1="205" x2="980" y2="205" stroke="#999" stroke-width="1" />
<line x1="972.5" y1="198" x2="972.5" y2="209" stroke="#999" stroke-width="1" />
<rect x="974.5" y="205.5" width="9" height="7" fill="#333" />
<circle cx="979" cy="209" r="2" fill="#ccc"/>
<path d="M994,198 l3,3 m0,-3 l-3,3" fill="none" stroke="#6a5a30" stroke-width="1.2" />
<path d="M997,212 L1000,206 M1001,204 L1003,199 M1000,208 L1006,208 L1009,208" fill="none" stroke="#8a7a40" stroke-width="1.3" stroke-dasharray="2,1.5"/>
<polygon points="1008,213 1011,210 1011,213" fill="#333" stroke="none" stroke-width="1" />
<rect x="1019.5" y="197.5" width="9" height="6" fill="#f4f4f4" stroke="#666"/>
<path d="M1026,203 L1034,203 L1030,207 Z" fill="#333" stroke="none" stroke-width="1" />
<ellipse cx="1031" cy="210" rx="4" ry="2.5" fill="#fff" stroke="#222" stroke-width="1.2"/>
<path d="M1046,201 L1059,200 L1062,198 L1062,209 L1059,212 C1055,209 1049,209 1046,211 Z" fill="#a9dcf0" stroke="#2a6a8a" stroke-width="1.2" />
<rect x="1072.5" y="206.5" width="14" height="5" fill="#c9efb7" stroke="#6a9a60"/>
<path d="M1075,206 L1075,198 M1082,206 L1082,198 M1075,205 L1082,205" fill="none" stroke="#1a3a4a" stroke-width="1.5" />
<polygon points="1072,201 1075,196 1078,201" fill="#2a90c0" stroke="none" stroke-width="1" />
<polygon points="1079,201 1082,196 1085,201" fill="#2a90c0" stroke="none" stroke-width="1" />
<circle cx="1098" cy="199" r="2.6" fill="#6a8a80"/>
<circle cx="1098" cy="211" r="2.6" fill="#6a8a80"/>
<circle cx="1111" cy="205" r="2.6" fill="#d08a9a"/>
<path d="M1098,199 L1104,205 L1098,211 M1104,205 L1111,205" fill="none" stroke="#333" stroke-width="1.2" />
<path d="M1125,210 C1127,204 1133,205 1138,198 C1140,203 1137,210 1130,212 Z" fill="#cfd1d2" stroke="none" stroke-width="1" />
<polygon points="1138,213 1141,210 1141,213" fill="#333" stroke="none" stroke-width="1" />
<rect x="1150.5" y="197.5" width="14" height="10" fill="#b9dcea" stroke="#1f5a78"/>
<rect x="1152" y="200" width="11" height="2" fill="#1f5a78" />
<ellipse cx="1160" cy="210" rx="4" ry="2.5" fill="#fff" stroke="#222" stroke-width="1.2"/>
<rect x="1176" y="199" width="14" height="12" fill="#d9dbdc" />
<rect x="1181" y="202" width="6" height="5" fill="#bfc1c2" />
<path d="M1208,197 L1216,212 L1200,212 Z" fill="none" stroke="#b5b7b8" stroke-width="2" />
<rect x="1229" y="198" width="3.5" height="14" fill="#a9abac" />
<rect x="1236" y="198" width="3.5" height="14" fill="#a9abac" />
<path d="M1253,203 L1258,198 L1268,198 L1268,206" fill="none" stroke="#7ab0c8" stroke-width="1.2" />
<line x1="1253" y1="212" x2="1268" y2="197" stroke="#1f3a4a" stroke-width="1.4" />
<polygon points="1270,213 1273,210 1273,213" fill="#333" stroke="none" stroke-width="1" />
<path d="M1002.5,393.5 L1002.5,409 L1006.4,405.6 L1009.3,411 L1011.6,410 L1009.2,404.6 L1014.6,404.4 Z" fill="#f6f6f6" stroke="#000" stroke-width="1.3" stroke-linejoin="round"/>
<defs>
<linearGradient id="gLeft" x1="0" y1="0" x2="0" y2="1"><stop offset="0" stop-color="#97a1ae"/><stop offset="1" stop-color="#8f98a6"/></linearGradient>
<linearGradient id="gFront" x1="0" y1="0" x2="1" y2="0"><stop offset="0" stop-color="#646a76"/><stop offset="1" stop-color="#5e646f"/></linearGradient>
<linearGradient id="gGrey" x1="0" y1="0" x2="1" y2="0"><stop offset="0" stop-color="#c3c8d2"/><stop offset="0.45" stop-color="#b8bdc7"/><stop offset="0.75" stop-color="#a5aab4"/><stop offset="1" stop-color="#8f949e"/></linearGradient>
<filter id="fb" x="-20%" y="-20%" width="140%" height="140%"><feGaussianBlur stdDeviation="3"/></filter>
</defs>
<polygon points="669.6,497.8 1231,377 1354,531.5 1331,676 768,794 647,642" fill="#595f69" stroke="none" stroke-width="1" />
<polygon points="1231,377 1354,531.5 1238,555 1209,522" fill="#676c74" stroke="none" stroke-width="1" />
<polygon points="788,646 1354,531.5 1331,676 768,794" fill="#565b63" stroke="none" stroke-width="1" />
<polygon points="647,642 768,794 753,909 629,753" fill="url(#gLeft)" stroke="none" stroke-width="1" />
<polygon points="768,794 1331,676 1314,790 753,909" fill="url(#gFront)" stroke="none" stroke-width="1" />
<polygon points="647,642 1209,522 1331,676 768,794" fill="#4eb3cf" stroke="none" stroke-width="1" />
<path d="M669.6,497.8 L1231,377 L1354,531.5 L1331,676 M669.6,497.8 L647,642 M669.6,497.8 L788,646 M1231,377 L1209,522 M1238,555 L1354,531.5" fill="none" stroke="#b4babd" stroke-width="0.9" opacity="0.75"/>
<path d="M647,642 L768,794 L1331,676 L1209,522" fill="none" stroke="#163640" stroke-width="0.9" opacity="0.8"/>
<path d="M768,794 L753,909" fill="none" stroke="#a9b0b8" stroke-width="0.8" opacity="0.6"/>
<path d="M1209,527 L702,646 Q690,651 691,660 L766,760 Q774,771 790,773 L1250,679 Q1286,671 1290,657 Z" fill="#5cc3de" stroke="#163640" stroke-width="0.9"/>
<path d="M1212,536 L712,649 Q703,654 705,662 L773,752 Q779,759 795,759 L1248,666 Q1277,659 1281,648 Z" fill="#52b9d5" stroke="#163640" stroke-width="0.9"/>
<path d="M711.0,625.0 C713.5,624.0 717.0,625.2 726.0,619.0 C735.0,612.8 753.0,596.3 765.0,588.0 C777.0,579.7 783.7,578.2 798.0,569.0 C812.3,559.8 837.8,540.5 851.0,533.0 C864.2,525.5 871.2,525.2 877.0,524.0 C882.8,522.8 882.8,524.2 886.0,526.0 C889.2,527.8 891.8,532.0 896.0,535.0 C900.2,538.0 903.5,542.8 911.0,544.0 C918.5,545.2 929.5,544.3 941.0,542.0 C952.5,539.7 969.0,533.5 980.0,530.0 C991.0,526.5 999.0,525.5 1007.0,521.0 C1015.0,516.5 1022.0,508.2 1028.0,503.0 C1034.0,497.8 1038.0,493.0 1043.0,490.0 C1048.0,487.0 1053.0,485.5 1058.0,485.0 C1063.0,484.5 1063.5,485.0 1073.0,487.0 C1082.5,489.0 1102.8,493.3 1115.0,497.0 C1127.2,500.7 1137.2,504.8 1146.0,509.0 C1154.8,513.2 1158.0,519.7 1168.0,522.0 C1178.0,524.3 1199.7,522.8 1206.0,523.0 L1240,562 L1281,626 Q1286,640 1281,650 L1266,660 L1251,660 L1100,697 L806,759 Q779,756 778,741 L764,727 L707,637 Q705,628 711,625 Z" fill="#53c4e0" stroke="#163640" stroke-width="1.1"/>
<path d="M778,741 Q781,731 797,735 L811,739 L826.0,734.0 C831.0,729.3 846.2,714.0 856.0,706.0 C865.8,698.0 875.8,692.5 885.0,686.0 C894.2,679.5 901.7,672.8 911.0,667.0 C920.3,661.2 933.0,655.0 941.0,651.0 C949.0,647.0 954.7,644.0 959.0,643.0 C963.3,642.0 963.8,643.2 967.0,645.0 C970.2,646.8 973.7,651.5 978.0,654.0 C982.3,656.5 985.7,658.7 993.0,660.0 C1000.3,661.3 1012.5,662.3 1022.0,662.0 C1031.5,661.7 1042.2,659.5 1050.0,658.0 C1057.8,656.5 1060.7,656.3 1069.0,653.0 C1077.3,649.7 1092.3,643.5 1100.0,638.0 C1107.7,632.5 1110.0,625.0 1115.0,620.0 C1120.0,615.0 1125.0,610.5 1130.0,608.0 C1135.0,605.5 1137.5,604.3 1145.0,605.0 C1152.5,605.7 1165.0,609.0 1175.0,612.0 C1185.0,615.0 1194.8,619.0 1205.0,623.0 C1215.2,627.0 1228.3,632.5 1236.0,636.0 C1243.7,639.5 1248.5,642.7 1251.0,644.0 L1281,641 L1283,650 L1266,660 L1251,660 L1100,697 L806,759 Q779,756 778,741 Z" fill="#3c8090" stroke="#163640" stroke-width="0.9"/>
<path d="M1251,644 L1281,641 L1283,650 L1266,660 L1251,660 Z" fill="#4792a6" stroke="none" stroke-width="1" />
<path d="M779,741 Q781,732 797,735 L811,739 L826,735 L834,757 L806,759 Q780,756 779,741 Z" fill="#4fa3b9" opacity="0.75"/>
<clipPath id="cg"><path d="M746.0,636.0 C749.2,633.3 753.3,628.5 765.0,620.0 C776.7,611.5 798.7,597.5 816.0,585.0 C833.3,572.5 857.2,552.3 869.0,545.0 C880.8,537.7 881.0,540.3 887.0,541.0 C893.0,541.7 899.5,545.5 905.0,549.0 C910.5,552.5 914.0,560.2 920.0,562.0 C926.0,563.8 931.0,561.3 941.0,560.0 C951.0,558.7 968.5,556.0 980.0,554.0 C991.5,552.0 1001.2,552.0 1010.0,548.0 C1018.8,544.0 1026.0,536.7 1033.0,530.0 C1040.0,523.3 1046.8,512.5 1052.0,508.0 C1057.2,503.5 1058.5,503.5 1064.0,503.0 C1069.5,502.5 1076.5,503.7 1085.0,505.0 C1093.5,506.3 1104.8,508.5 1115.0,511.0 C1125.2,513.5 1137.2,516.8 1146.0,520.0 C1154.8,523.2 1161.8,525.8 1168.0,530.0 C1174.2,534.2 1178.7,538.7 1183.0,545.0 C1187.3,551.3 1190.2,561.0 1194.0,568.0 C1197.8,575.0 1201.5,580.3 1206.0,587.0 C1210.5,593.7 1217.3,602.5 1221.0,608.0 C1224.7,613.5 1224.3,614.5 1228.0,620.0 C1231.7,625.5 1240.5,637.5 1243.0,641.0 L1243.0,641.0 C1240.5,638.7 1234.2,632.3 1228.0,627.0 C1221.8,621.7 1214.8,614.2 1206.0,609.0 C1197.2,603.8 1186.3,600.0 1175.0,596.0 C1163.7,592.0 1147.5,586.5 1138.0,585.0 C1128.5,583.5 1123.0,585.2 1118.0,587.0 C1113.0,588.8 1112.7,591.8 1108.0,596.0 C1103.3,600.2 1096.5,608.2 1090.0,612.0 C1083.5,615.8 1075.7,617.5 1069.0,619.0 C1062.3,620.5 1059.3,618.8 1050.0,621.0 C1040.7,623.2 1024.7,630.0 1013.0,632.0 C1001.3,634.0 988.3,632.8 980.0,633.0 C971.7,633.2 967.8,634.2 963.0,633.0 C958.2,631.8 956.5,626.7 951.0,626.0 C945.5,625.3 937.8,624.5 930.0,629.0 C922.2,633.5 914.0,646.0 904.0,653.0 C894.0,660.0 881.2,665.2 870.0,671.0 C858.8,676.8 848.7,680.8 837.0,688.0 C825.3,695.2 808.3,710.2 800.0,714.0 C791.7,717.8 791.8,716.5 787.0,711.0 C782.2,705.5 776.5,690.2 771.0,681.0 C765.5,671.8 758.2,663.5 754.0,656.0 C749.8,648.5 747.3,639.3 746.0,636.0 Z"/></clipPath>
<path d="M746.0,636.0 C749.2,633.3 753.3,628.5 765.0,620.0 C776.7,611.5 798.7,597.5 816.0,585.0 C833.3,572.5 857.2,552.3 869.0,545.0 C880.8,537.7 881.0,540.3 887.0,541.0 C893.0,541.7 899.5,545.5 905.0,549.0 C910.5,552.5 914.0,560.2 920.0,562.0 C926.0,563.8 931.0,561.3 941.0,560.0 C951.0,558.7 968.5,556.0 980.0,554.0 C991.5,552.0 1001.2,552.0 1010.0,548.0 C1018.8,544.0 1026.0,536.7 1033.0,530.0 C1040.0,523.3 1046.8,512.5 1052.0,508.0 C1057.2,503.5 1058.5,503.5 1064.0,503.0 C1069.5,502.5 1076.5,503.7 1085.0,505.0 C1093.5,506.3 1104.8,508.5 1115.0,511.0 C1125.2,513.5 1137.2,516.8 1146.0,520.0 C1154.8,523.2 1161.8,525.8 1168.0,530.0 C1174.2,534.2 1178.7,538.7 1183.0,545.0 C1187.3,551.3 1190.2,561.0 1194.0,568.0 C1197.8,575.0 1201.5,580.3 1206.0,587.0 C1210.5,593.7 1217.3,602.5 1221.0,608.0 C1224.7,613.5 1224.3,614.5 1228.0,620.0 C1231.7,625.5 1240.5,637.5 1243.0,641.0 L1243.0,641.0 C1240.5,638.7 1234.2,632.3 1228.0,627.0 C1221.8,621.7 1214.8,614.2 1206.0,609.0 C1197.2,603.8 1186.3,600.0 1175.0,596.0 C1163.7,592.0 1147.5,586.5 1138.0,585.0 C1128.5,583.5 1123.0,585.2 1118.0,587.0 C1113.0,588.8 1112.7,591.8 1108.0,596.0 C1103.3,600.2 1096.5,608.2 1090.0,612.0 C1083.5,615.8 1075.7,617.5 1069.0,619.0 C1062.3,620.5 1059.3,618.8 1050.0,621.0 C1040.7,623.2 1024.7,630.0 1013.0,632.0 C1001.3,634.0 988.3,632.8 980.0,633.0 C971.7,633.2 967.8,634.2 963.0,633.0 C958.2,631.8 956.5,626.7 951.0,626.0 C945.5,625.3 937.8,624.5 930.0,629.0 C922.2,633.5 914.0,646.0 904.0,653.0 C894.0,660.0 881.2,665.2 870.0,671.0 C858.8,676.8 848.7,680.8 837.0,688.0 C825.3,695.2 808.3,710.2 800.0,714.0 C791.7,717.8 791.8,716.5 787.0,711.0 C782.2,705.5 776.5,690.2 771.0,681.0 C765.5,671.8 758.2,663.5 754.0,656.0 C749.8,648.5 747.3,639.3 746.0,636.0 Z" fill="url(#gGrey)"/>
<g clip-path="url(#cg)"><g opacity="0.6" filter="url(#fb)"><path d="M760,650 L800,622 L815,640 L778,672 Z" fill="#e6e9f0"/><path d="M870,575 L905,556 L915,566 L878,590 Z" fill="#c9cbe8"/><path d="M1045,525 L1065,510 L1078,530 L1060,545 Z" fill="#dfe2ea"/><path d="M1040,585 L1075,565 L1085,580 L1050,600 Z" fill="#e3e6ee"/><path d="M1150,540 L1230,600 L1243,641 L1180,590 Z" fill="#7d828c"/></g></g>
<g clip-path="url(#cg)"><path d="M748.0,645.1 C749.3,644.1 753.3,641.2 756.0,639.3 C758.7,637.3 761.3,635.2 764.0,633.5 C766.7,631.7 769.3,630.2 772.0,628.6 C774.7,627.0 777.3,625.5 780.0,623.9 C782.7,622.3 785.3,620.7 788.0,619.2 C790.7,617.7 793.3,616.3 796.0,614.7 C798.7,613.2 801.3,611.5 804.0,609.7 C806.7,608.0 809.3,606.1 812.0,604.2 C814.7,602.4 817.3,600.5 820.0,598.5 C822.7,596.5 825.3,594.5 828.0,592.5 C830.7,590.5 833.3,588.5 836.0,586.5 C838.7,584.6 841.3,582.7 844.0,580.7 C846.7,578.8 849.3,576.9 852.0,575.0 C854.7,573.0 857.3,571.1 860.0,569.2 C862.7,567.3 865.3,564.8 868.0,563.4 C870.7,562.0 873.3,561.6 876.0,560.9 C878.7,560.1 881.3,559.0 884.0,558.7 C886.7,558.5 889.3,558.9 892.0,559.5 C894.7,560.0 897.3,561.0 900.0,561.9 C902.7,562.9 905.3,563.9 908.0,565.3 C910.7,566.7 913.3,569.1 916.0,570.2 C918.7,571.3 921.3,571.8 924.0,571.8 C926.7,571.9 929.3,570.7 932.0,570.4 C934.7,570.0 937.3,569.9 940.0,569.5 C942.7,569.2 945.3,568.7 948.0,568.4 C950.7,568.1 953.3,567.9 956.0,567.7 C958.7,567.5 961.3,567.4 964.0,567.2 C966.7,566.9 969.3,566.5 972.0,566.1 C974.7,565.8 977.3,565.5 980.0,565.1 C982.7,564.6 985.3,564.1 988.0,563.7 C990.7,563.2 993.3,562.7 996.0,562.2 C998.7,561.8 1001.3,561.5 1004.0,560.8 C1006.7,560.2 1009.3,559.8 1012.0,558.4 C1014.7,557.1 1017.3,554.6 1020.0,552.7 C1022.7,550.8 1025.3,549.1 1028.0,547.0 C1030.7,545.0 1033.3,542.8 1036.0,540.3 C1038.7,537.8 1041.3,534.8 1044.0,532.0 C1046.7,529.3 1049.3,525.7 1052.0,523.8 C1054.7,521.9 1057.3,521.5 1060.0,520.8 C1062.7,520.1 1065.3,519.7 1068.0,519.6 C1070.7,519.4 1073.3,519.8 1076.0,519.9 C1078.7,520.0 1081.3,520.0 1084.0,520.2 C1086.7,520.4 1089.3,520.7 1092.0,520.9 C1094.7,521.1 1097.3,521.2 1100.0,521.3 C1102.7,521.4 1105.3,521.6 1108.0,521.7 C1110.7,521.8 1113.3,521.8 1116.0,522.1 C1118.7,522.5 1121.3,523.2 1124.0,523.8 C1126.7,524.4 1129.3,525.0 1132.0,525.7 C1134.7,526.3 1137.3,526.9 1140.0,527.7 C1142.7,528.5 1145.3,529.3 1148.0,530.3 C1150.7,531.3 1153.3,532.6 1156.0,533.8 C1158.7,534.9 1161.3,535.8 1164.0,537.2 C1166.7,538.7 1169.3,540.4 1172.0,542.6 C1174.7,544.7 1177.3,546.6 1180.0,549.9 C1182.7,553.1 1185.3,557.6 1188.0,561.9 C1190.7,566.2 1193.3,571.7 1196.0,575.9 C1198.7,580.1 1201.3,583.6 1204.0,587.2 C1206.7,590.9 1209.3,594.4 1212.0,598.0 C1214.7,601.5 1217.3,604.7 1220.0,608.5 C1222.7,612.4 1225.3,617.1 1228.0,621.0 C1230.7,624.8 1233.3,628.3 1236.0,631.7 C1238.7,635.0 1242.7,639.4 1244.0,641.0 C1245.3,642.6 1244.0,641.0 1244.0,641.0  M748.0,656.6 C749.3,655.8 753.3,653.4 756.0,651.8 C758.7,650.2 761.3,648.5 764.0,647.0 C766.7,645.5 769.3,644.3 772.0,643.0 C774.7,641.7 777.3,640.4 780.0,639.1 C782.7,637.8 785.3,636.4 788.0,635.3 C790.7,634.1 793.3,633.2 796.0,631.9 C798.7,630.6 801.3,629.1 804.0,627.4 C806.7,625.8 809.3,623.8 812.0,621.9 C814.7,620.0 817.3,618.1 820.0,616.2 C822.7,614.3 825.3,612.2 828.0,610.3 C830.7,608.3 833.3,606.3 836.0,604.4 C838.7,602.4 841.3,600.7 844.0,598.8 C846.7,597.0 849.3,595.2 852.0,593.3 C854.7,591.5 857.3,589.7 860.0,587.9 C862.7,586.0 865.3,583.8 868.0,582.4 C870.7,581.0 873.3,580.4 876.0,579.5 C878.7,578.6 881.3,577.5 884.0,577.0 C886.7,576.6 889.3,576.7 892.0,576.9 C894.7,577.1 897.3,577.7 900.0,578.2 C902.7,578.7 905.3,579.2 908.0,579.9 C910.7,580.7 913.3,582.2 916.0,582.7 C918.7,583.2 921.3,583.1 924.0,582.8 C926.7,582.4 929.3,581.1 932.0,580.5 C934.7,580.0 937.3,580.0 940.0,579.7 C942.7,579.3 945.3,578.7 948.0,578.5 C950.7,578.3 953.3,578.3 956.0,578.3 C958.7,578.4 961.3,578.8 964.0,578.7 C966.7,578.6 969.3,578.1 972.0,577.8 C974.7,577.5 977.3,577.3 980.0,576.9 C982.7,576.6 985.3,576.1 988.0,575.7 C990.7,575.3 993.3,574.9 996.0,574.5 C998.7,574.1 1001.3,573.8 1004.0,573.3 C1006.7,572.8 1009.3,572.4 1012.0,571.3 C1014.7,570.1 1017.3,567.9 1020.0,566.2 C1022.7,564.5 1025.3,562.9 1028.0,561.1 C1030.7,559.2 1033.3,557.3 1036.0,555.1 C1038.7,552.9 1041.3,550.3 1044.0,547.9 C1046.7,545.5 1049.3,542.3 1052.0,540.7 C1054.7,539.1 1057.3,538.7 1060.0,538.1 C1062.7,537.5 1065.3,537.2 1068.0,536.9 C1070.7,536.7 1073.3,536.8 1076.0,536.8 C1078.7,536.7 1081.3,536.6 1084.0,536.5 C1086.7,536.5 1089.3,536.7 1092.0,536.5 C1094.7,536.3 1097.3,535.9 1100.0,535.6 C1102.7,535.3 1105.3,535.0 1108.0,534.7 C1110.7,534.4 1113.3,533.8 1116.0,533.8 C1118.7,533.8 1121.3,534.3 1124.0,534.7 C1126.7,535.1 1129.3,535.6 1132.0,536.1 C1134.7,536.6 1137.3,537.1 1140.0,537.8 C1142.7,538.5 1145.3,539.4 1148.0,540.4 C1150.7,541.3 1153.3,542.5 1156.0,543.6 C1158.7,544.7 1161.3,545.6 1164.0,546.9 C1166.7,548.2 1169.3,549.8 1172.0,551.7 C1174.7,553.6 1177.3,555.4 1180.0,558.3 C1182.7,561.1 1185.3,565.0 1188.0,568.8 C1190.7,572.6 1193.3,577.2 1196.0,580.9 C1198.7,584.6 1201.3,587.6 1204.0,590.9 C1206.7,594.2 1209.3,597.5 1212.0,600.8 C1214.7,604.1 1217.3,607.1 1220.0,610.6 C1222.7,614.2 1225.3,618.4 1228.0,622.0 C1230.7,625.6 1233.3,629.0 1236.0,632.1 C1238.7,635.3 1242.7,639.5 1244.0,641.0 C1245.3,642.5 1244.0,641.0 1244.0,641.0  M748.0,668.1 C749.3,667.4 753.3,665.5 756.0,664.3 C758.7,663.0 761.3,661.7 764.0,660.5 C766.7,659.4 769.3,658.4 772.0,657.3 C774.7,656.3 777.3,655.3 780.0,654.3 C782.7,653.3 785.3,652.2 788.0,651.3 C790.7,650.4 793.3,650.1 796.0,649.0 C798.7,648.0 801.3,646.7 804.0,645.1 C806.7,643.6 809.3,641.5 812.0,639.6 C814.7,637.7 817.3,635.8 820.0,633.9 C822.7,632.0 825.3,630.0 828.0,628.0 C830.7,626.1 833.3,624.0 836.0,622.2 C838.7,620.3 841.3,618.6 844.0,616.9 C846.7,615.2 849.3,613.4 852.0,611.7 C854.7,610.0 857.3,608.2 860.0,606.5 C862.7,604.8 865.3,602.7 868.0,601.3 C870.7,599.9 873.3,599.2 876.0,598.2 C878.7,597.2 881.3,596.0 884.0,595.3 C886.7,594.7 889.3,594.5 892.0,594.3 C894.7,594.2 897.3,594.4 900.0,594.4 C902.7,594.5 905.3,594.5 908.0,594.6 C910.7,594.7 913.3,595.4 916.0,595.2 C918.7,595.1 921.3,594.5 924.0,593.7 C926.7,593.0 929.3,591.4 932.0,590.7 C934.7,590.1 937.3,590.1 940.0,589.8 C942.7,589.4 945.3,588.8 948.0,588.6 C950.7,588.5 953.3,588.8 956.0,589.0 C958.7,589.3 961.3,590.1 964.0,590.1 C966.7,590.2 969.3,589.7 972.0,589.4 C974.7,589.2 977.3,589.0 980.0,588.8 C982.7,588.5 985.3,588.1 988.0,587.8 C990.7,587.4 993.3,587.1 996.0,586.8 C998.7,586.4 1001.3,586.2 1004.0,585.8 C1006.7,585.3 1009.3,585.1 1012.0,584.1 C1014.7,583.1 1017.3,581.2 1020.0,579.7 C1022.7,578.2 1025.3,576.7 1028.0,575.1 C1030.7,573.5 1033.3,571.8 1036.0,569.9 C1038.7,568.0 1041.3,565.7 1044.0,563.7 C1046.7,561.6 1049.3,559.0 1052.0,557.6 C1054.7,556.2 1057.3,555.9 1060.0,555.4 C1062.7,554.8 1065.3,554.6 1068.0,554.3 C1070.7,554.0 1073.3,553.9 1076.0,553.7 C1078.7,553.4 1081.3,553.2 1084.0,552.9 C1086.7,552.6 1089.3,552.6 1092.0,552.1 C1094.7,551.6 1097.3,550.6 1100.0,549.8 C1102.7,549.1 1105.3,548.4 1108.0,547.6 C1110.7,546.9 1113.3,545.7 1116.0,545.4 C1118.7,545.1 1121.3,545.4 1124.0,545.6 C1126.7,545.8 1129.3,546.2 1132.0,546.6 C1134.7,547.0 1137.3,547.2 1140.0,547.9 C1142.7,548.5 1145.3,549.5 1148.0,550.4 C1150.7,551.4 1153.3,552.5 1156.0,553.5 C1158.7,554.5 1161.3,555.4 1164.0,556.6 C1166.7,557.8 1169.3,559.2 1172.0,560.9 C1174.7,562.6 1177.3,564.2 1180.0,566.7 C1182.7,569.2 1185.3,572.5 1188.0,575.7 C1190.7,578.9 1193.3,582.8 1196.0,586.0 C1198.7,589.1 1201.3,591.6 1204.0,594.5 C1206.7,597.5 1209.3,600.5 1212.0,603.5 C1214.7,606.6 1217.3,609.4 1220.0,612.7 C1222.7,616.0 1225.3,619.8 1228.0,623.1 C1230.7,626.4 1233.3,629.7 1236.0,632.6 C1238.7,635.6 1242.7,639.6 1244.0,641.0 C1245.3,642.4 1244.0,641.0 1244.0,641.0  M748.0,679.6 C749.3,679.1 753.3,677.7 756.0,676.8 C758.7,675.9 761.3,674.9 764.0,674.0 C766.7,673.2 769.3,672.5 772.0,671.7 C774.7,671.0 777.3,670.2 780.0,669.5 C782.7,668.7 785.3,667.9 788.0,667.4 C790.7,666.8 793.3,666.9 796.0,666.2 C798.7,665.4 801.3,664.3 804.0,662.8 C806.7,661.3 809.3,659.1 812.0,657.3 C814.7,655.4 817.3,653.5 820.0,651.6 C822.7,649.7 825.3,647.7 828.0,645.8 C830.7,643.9 833.3,641.8 836.0,640.0 C838.7,638.2 841.3,636.6 844.0,635.0 C846.7,633.3 849.3,631.7 852.0,630.1 C854.7,628.4 857.3,626.8 860.0,625.2 C862.7,623.5 865.3,621.6 868.0,620.3 C870.7,618.9 873.3,617.9 876.0,616.8 C878.7,615.7 881.3,614.4 884.0,613.6 C886.7,612.8 889.3,612.2 892.0,611.7 C894.7,611.3 897.3,611.1 900.0,610.7 C902.7,610.3 905.3,609.7 908.0,609.2 C910.7,608.8 913.3,608.5 916.0,607.7 C918.7,607.0 921.3,605.8 924.0,604.6 C926.7,603.5 929.3,601.7 932.0,600.9 C934.7,600.1 937.3,600.3 940.0,599.9 C942.7,599.5 945.3,598.8 948.0,598.8 C950.7,598.7 953.3,599.2 956.0,599.7 C958.7,600.2 961.3,601.4 964.0,601.6 C966.7,601.9 969.3,601.3 972.0,601.1 C974.7,600.9 977.3,600.8 980.0,600.6 C982.7,600.4 985.3,600.1 988.0,599.8 C990.7,599.5 993.3,599.3 996.0,599.0 C998.7,598.7 1001.3,598.6 1004.0,598.2 C1006.7,597.9 1009.3,597.8 1012.0,596.9 C1014.7,596.1 1017.3,594.4 1020.0,593.1 C1022.7,591.8 1025.3,590.6 1028.0,589.2 C1030.7,587.8 1033.3,586.3 1036.0,584.7 C1038.7,583.1 1041.3,581.2 1044.0,579.5 C1046.7,577.8 1049.3,575.7 1052.0,574.5 C1054.7,573.4 1057.3,573.2 1060.0,572.7 C1062.7,572.2 1065.3,572.0 1068.0,571.7 C1070.7,571.3 1073.3,570.9 1076.0,570.5 C1078.7,570.1 1081.3,569.8 1084.0,569.3 C1086.7,568.8 1089.3,568.5 1092.0,567.7 C1094.7,566.8 1097.3,565.3 1100.0,564.1 C1102.7,562.9 1105.3,561.8 1108.0,560.6 C1110.7,559.4 1113.3,557.7 1116.0,557.0 C1118.7,556.4 1121.3,556.6 1124.0,556.6 C1126.7,556.6 1129.3,556.8 1132.0,557.0 C1134.7,557.3 1137.3,557.4 1140.0,558.0 C1142.7,558.6 1145.3,559.6 1148.0,560.5 C1150.7,561.4 1153.3,562.4 1156.0,563.4 C1158.7,564.3 1161.3,565.2 1164.0,566.3 C1166.7,567.4 1169.3,568.6 1172.0,570.1 C1174.7,571.5 1177.3,573.0 1180.0,575.1 C1182.7,577.2 1185.3,579.9 1188.0,582.6 C1190.7,585.2 1193.3,588.4 1196.0,591.0 C1198.7,593.6 1201.3,595.6 1204.0,598.2 C1206.7,600.7 1209.3,603.6 1212.0,606.3 C1214.7,609.1 1217.3,611.8 1220.0,614.8 C1222.7,617.7 1225.3,621.1 1228.0,624.1 C1230.7,627.2 1233.3,630.3 1236.0,633.1 C1238.7,635.9 1242.7,639.7 1244.0,641.0 C1245.3,642.3 1244.0,641.0 1244.0,641.0  M748.0,691.1 C749.3,690.8 753.3,689.9 756.0,689.3 C758.7,688.7 761.3,688.1 764.0,687.6 C766.7,687.0 769.3,686.6 772.0,686.1 C774.7,685.6 777.3,685.1 780.0,684.7 C782.7,684.2 785.3,683.6 788.0,683.4 C790.7,683.2 793.3,683.8 796.0,683.3 C798.7,682.9 801.3,681.9 804.0,680.5 C806.7,679.1 809.3,676.8 812.0,674.9 C814.7,673.1 817.3,671.2 820.0,669.3 C822.7,667.4 825.3,665.5 828.0,663.5 C830.7,661.6 833.3,659.6 836.0,657.8 C838.7,656.1 841.3,654.6 844.0,653.1 C846.7,651.5 849.3,650.0 852.0,648.4 C854.7,646.9 857.3,645.4 860.0,643.8 C862.7,642.3 865.3,640.6 868.0,639.2 C870.7,637.8 873.3,636.7 876.0,635.5 C878.7,634.3 881.3,632.9 884.0,631.9 C886.7,630.8 889.3,630.0 892.0,629.2 C894.7,628.3 897.3,627.8 900.0,626.9 C902.7,626.1 905.3,625.0 908.0,623.9 C910.7,622.8 913.3,621.6 916.0,620.2 C918.7,618.9 921.3,617.1 924.0,615.6 C926.7,614.1 929.3,612.0 932.0,611.1 C934.7,610.1 937.3,610.4 940.0,610.0 C942.7,609.7 945.3,608.8 948.0,608.9 C950.7,608.9 953.3,609.7 956.0,610.4 C958.7,611.1 961.3,612.7 964.0,613.1 C966.7,613.5 969.3,612.9 972.0,612.8 C974.7,612.7 977.3,612.6 980.0,612.5 C982.7,612.3 985.3,612.1 988.0,611.9 C990.7,611.7 993.3,611.5 996.0,611.3 C998.7,611.1 1001.3,610.9 1004.0,610.7 C1006.7,610.4 1009.3,610.5 1012.0,609.8 C1014.7,609.1 1017.3,607.7 1020.0,606.6 C1022.7,605.5 1025.3,604.4 1028.0,603.2 C1030.7,602.0 1033.3,600.8 1036.0,599.5 C1038.7,598.2 1041.3,596.7 1044.0,595.3 C1046.7,594.0 1049.3,592.4 1052.0,591.5 C1054.7,590.6 1057.3,590.4 1060.0,590.0 C1062.7,589.6 1065.3,589.4 1068.0,589.0 C1070.7,588.6 1073.3,588.0 1076.0,587.4 C1078.7,586.8 1081.3,586.3 1084.0,585.6 C1086.7,584.9 1089.3,584.4 1092.0,583.2 C1094.7,582.0 1097.3,580.0 1100.0,578.4 C1102.7,576.8 1105.3,575.2 1108.0,573.5 C1110.7,571.9 1113.3,569.7 1116.0,568.6 C1118.7,567.6 1121.3,567.7 1124.0,567.5 C1126.7,567.3 1129.3,567.4 1132.0,567.5 C1134.7,567.6 1137.3,567.6 1140.0,568.1 C1142.7,568.6 1145.3,569.7 1148.0,570.5 C1150.7,571.4 1153.3,572.3 1156.0,573.2 C1158.7,574.1 1161.3,575.0 1164.0,575.9 C1166.7,576.9 1169.3,578.0 1172.0,579.2 C1174.7,580.5 1177.3,581.8 1180.0,583.5 C1182.7,585.2 1185.3,587.4 1188.0,589.5 C1190.7,591.6 1193.3,594.0 1196.0,596.1 C1198.7,598.1 1201.3,599.7 1204.0,601.8 C1206.7,604.0 1209.3,606.6 1212.0,609.1 C1214.7,611.6 1217.3,614.2 1220.0,616.9 C1222.7,619.5 1225.3,622.4 1228.0,625.2 C1230.7,628.0 1233.3,631.0 1236.0,633.6 C1238.7,636.3 1242.7,639.8 1244.0,641.0 C1245.3,642.2 1244.0,641.0 1244.0,641.0  M748.0,701.8 C749.3,701.7 753.3,701.3 756.0,701.0 C758.7,700.7 761.3,700.4 764.0,700.2 C766.7,699.9 769.3,699.7 772.0,699.5 C774.7,699.3 777.3,699.0 780.0,698.8 C782.7,698.7 785.3,698.3 788.0,698.4 C790.7,698.5 793.3,699.6 796.0,699.4 C798.7,699.1 801.3,698.4 804.0,697.0 C806.7,695.7 809.3,693.3 812.0,691.4 C814.7,689.6 817.3,687.7 820.0,685.8 C822.7,683.9 825.3,682.0 828.0,680.1 C830.7,678.2 833.3,676.1 836.0,674.4 C838.7,672.7 841.3,671.4 844.0,669.9 C846.7,668.5 849.3,667.0 852.0,665.6 C854.7,664.1 857.3,662.7 860.0,661.2 C862.7,659.8 865.3,658.3 868.0,656.9 C870.7,655.5 873.3,654.2 876.0,652.9 C878.7,651.6 881.3,650.2 884.0,649.0 C886.7,647.7 889.3,646.6 892.0,645.4 C894.7,644.3 897.3,643.4 900.0,642.1 C902.7,640.8 905.3,639.3 908.0,637.6 C910.7,635.9 913.3,633.9 916.0,631.9 C918.7,630.0 921.3,627.7 924.0,625.8 C926.7,623.9 929.3,621.6 932.0,620.6 C934.7,619.5 937.3,619.8 940.0,619.5 C942.7,619.1 945.3,618.2 948.0,618.3 C950.7,618.5 953.3,619.5 956.0,620.4 C958.7,621.3 961.3,623.3 964.0,623.8 C966.7,624.4 969.3,623.7 972.0,623.7 C974.7,623.6 977.3,623.6 980.0,623.5 C982.7,623.4 985.3,623.2 988.0,623.1 C990.7,623.0 993.3,622.8 996.0,622.7 C998.7,622.6 1001.3,622.5 1004.0,622.3 C1006.7,622.1 1009.3,622.3 1012.0,621.8 C1014.7,621.2 1017.3,620.1 1020.0,619.1 C1022.7,618.2 1025.3,617.3 1028.0,616.3 C1030.7,615.3 1033.3,614.4 1036.0,613.3 C1038.7,612.3 1041.3,611.1 1044.0,610.1 C1046.7,609.1 1049.3,607.9 1052.0,607.3 C1054.7,606.6 1057.3,606.5 1060.0,606.1 C1062.7,605.8 1065.3,605.7 1068.0,605.2 C1070.7,604.7 1073.3,603.9 1076.0,603.2 C1078.7,602.4 1081.3,601.8 1084.0,600.9 C1086.7,600.0 1089.3,599.3 1092.0,597.8 C1094.7,596.2 1097.3,593.7 1100.0,591.7 C1102.7,589.7 1105.3,587.7 1108.0,585.6 C1110.7,583.6 1113.3,580.8 1116.0,579.5 C1118.7,578.2 1121.3,578.0 1124.0,577.7 C1126.7,577.3 1129.3,577.3 1132.0,577.2 C1134.7,577.2 1137.3,577.1 1140.0,577.5 C1142.7,578.0 1145.3,579.1 1148.0,579.9 C1150.7,580.7 1153.3,581.6 1156.0,582.5 C1158.7,583.3 1161.3,584.1 1164.0,585.0 C1166.7,585.9 1169.3,586.7 1172.0,587.8 C1174.7,588.8 1177.3,590.0 1180.0,591.4 C1182.7,592.7 1185.3,594.4 1188.0,595.9 C1190.7,597.5 1193.3,599.2 1196.0,600.8 C1198.7,602.3 1201.3,603.4 1204.0,605.2 C1206.7,607.1 1209.3,609.4 1212.0,611.7 C1214.7,613.9 1217.3,616.4 1220.0,618.8 C1222.7,621.2 1225.3,623.6 1228.0,626.2 C1230.7,628.7 1233.3,631.6 1236.0,634.1 C1238.7,636.5 1242.7,639.8 1244.0,641.0 C1245.3,642.2 1244.0,641.0 1244.0,641.0  M772.0,611.2 Q771.0,663.1 763.0,715.0 M797.0,594.0 Q796.0,654.6 788.0,715.2 M822.0,576.5 Q821.0,642.7 813.0,708.9 M847.0,557.6 Q846.0,624.5 838.0,691.5 M872.0,540.3 Q871.0,609.5 863.0,678.6 M897.0,541.4 Q896.0,603.5 888.0,665.5 M922.0,557.8 Q921.0,603.3 913.0,648.7 M947.0,555.1 Q946.0,593.5 938.0,631.9 M972.0,551.2 Q971.0,594.1 963.0,637.0 M997.0,546.6 Q996.0,591.7 988.0,636.8 M1022.0,534.6 Q1021.0,585.3 1013.0,636.0 M1047.0,509.8 Q1046.0,569.2 1038.0,628.6 M1072.0,499.8 Q1071.0,561.7 1063.0,623.6 M1097.0,503.4 Q1096.0,560.0 1088.0,616.7 M1122.0,509.0 Q1121.0,552.3 1113.0,595.5 M1147.0,516.5 Q1146.0,552.7 1138.0,589.0 M1172.0,530.0 Q1171.0,563.2 1163.0,596.4 M1197.0,568.8 Q1196.0,587.1 1188.0,605.5 M1222.0,605.7 Q1221.0,612.2 1213.0,618.7" fill="none" stroke="#28363e" stroke-width="1" opacity="0.85"/></g>
<path d="M746.0,636.0 C749.2,633.3 753.3,628.5 765.0,620.0 C776.7,611.5 798.7,597.5 816.0,585.0 C833.3,572.5 857.2,552.3 869.0,545.0 C880.8,537.7 881.0,540.3 887.0,541.0 C893.0,541.7 899.5,545.5 905.0,549.0 C910.5,552.5 914.0,560.2 920.0,562.0 C926.0,563.8 931.0,561.3 941.0,560.0 C951.0,558.7 968.5,556.0 980.0,554.0 C991.5,552.0 1001.2,552.0 1010.0,548.0 C1018.8,544.0 1026.0,536.7 1033.0,530.0 C1040.0,523.3 1046.8,512.5 1052.0,508.0 C1057.2,503.5 1058.5,503.5 1064.0,503.0 C1069.5,502.5 1076.5,503.7 1085.0,505.0 C1093.5,506.3 1104.8,508.5 1115.0,511.0 C1125.2,513.5 1137.2,516.8 1146.0,520.0 C1154.8,523.2 1161.8,525.8 1168.0,530.0 C1174.2,534.2 1178.7,538.7 1183.0,545.0 C1187.3,551.3 1190.2,561.0 1194.0,568.0 C1197.8,575.0 1201.5,580.3 1206.0,587.0 C1210.5,593.7 1217.3,602.5 1221.0,608.0 C1224.7,613.5 1224.3,614.5 1228.0,620.0 C1231.7,625.5 1240.5,637.5 1243.0,641.0 L1243.0,641.0 C1240.5,638.7 1234.2,632.3 1228.0,627.0 C1221.8,621.7 1214.8,614.2 1206.0,609.0 C1197.2,603.8 1186.3,600.0 1175.0,596.0 C1163.7,592.0 1147.5,586.5 1138.0,585.0 C1128.5,583.5 1123.0,585.2 1118.0,587.0 C1113.0,588.8 1112.7,591.8 1108.0,596.0 C1103.3,600.2 1096.5,608.2 1090.0,612.0 C1083.5,615.8 1075.7,617.5 1069.0,619.0 C1062.3,620.5 1059.3,618.8 1050.0,621.0 C1040.7,623.2 1024.7,630.0 1013.0,632.0 C1001.3,634.0 988.3,632.8 980.0,633.0 C971.7,633.2 967.8,634.2 963.0,633.0 C958.2,631.8 956.5,626.7 951.0,626.0 C945.5,625.3 937.8,624.5 930.0,629.0 C922.2,633.5 914.0,646.0 904.0,653.0 C894.0,660.0 881.2,665.2 870.0,671.0 C858.8,676.8 848.7,680.8 837.0,688.0 C825.3,695.2 808.3,710.2 800.0,714.0 C791.7,717.8 791.8,716.5 787.0,711.0 C782.2,705.5 776.5,690.2 771.0,681.0 C765.5,671.8 758.2,663.5 754.0,656.0 C749.8,648.5 747.3,639.3 746.0,636.0 Z" fill="none" stroke="#1f3038" stroke-width="1"/>
<path d="M952,626 L963,632 L996,662 L988,661 L966,644 Z" fill="#62889a" stroke="#1f3038" stroke-width="0.8"/>
<path d="M746.6,602.6 L785.7,605.8 M790.2,573.5 L826.9,576.8 M834.0,544.5 L867.0,546.5 M881.4,525.0 L912.3,555.4 M927.9,542.9 L959.9,557.1 M978.7,530.4 L1009.4,548.1 M1024.2,506.2 L1046.4,514.5 M1069.9,486.6 L1092.5,506.5 M1120.8,499.2 L1141.3,518.6" fill="none" stroke="#163640" stroke-width="0.9"/>
<path d="M815.0,703.5 L809.0,734.0 M839.0,687.0 L833.0,727.5 M863.0,674.6 L857.0,705.3 M887.0,662.0 L881.0,688.8 M911.0,646.5 L905.0,671.4 M935.0,628.3 L929.0,657.4 M959.0,630.7 L953.0,645.7 M1010.0,632.1 L1004.0,660.8 M1024.0,628.7 L1018.0,661.7 M1038.0,624.6 L1032.0,660.6 M1052.0,620.8 L1046.0,658.6 M1066.0,619.3 L1060.0,655.4 M1080.0,615.3 L1074.0,650.6 M1094.0,608.4 L1088.0,643.8 M1108.0,596.0 L1102.0,635.6 M1122.0,586.6 L1116.0,619.2 M1136.0,585.2 L1130.0,608.0 M1150.0,588.6 L1144.0,605.2 M1164.0,592.7 L1158.0,608.0 M1178.0,597.3 L1172.0,611.3 M1192.0,603.1 L1186.0,616.0 M1206.0,609.0 L1200.0,621.2 M1220.0,620.5 L1214.0,626.8" fill="none" stroke="#163640" stroke-width="0.9"/>
<path d="M716.0,648.0 L740.0,644.0 M724.7,661.7 L748.7,657.7 M733.3,675.3 L757.3,671.3 M742.0,689.0 L766.0,685.0 M750.7,702.7 L774.7,698.7 M759.3,716.3 L783.3,712.3" fill="none" stroke="#163640" stroke-width="1.3"/>
<path d="M1180.0,540.0 L1214.0,536.0 M1187.5,551.9 L1221.5,547.9 M1195.0,563.8 L1229.0,559.8 M1202.5,575.6 L1236.5,571.6 M1210.0,587.5 L1244.0,583.5 M1217.5,599.4 L1251.5,595.4 M1225.0,611.2 L1259.0,607.2 M1232.5,623.1 L1266.5,619.1" fill="none" stroke="#163640" stroke-width="1.3"/>
<path d="M1171,522 Q1200,520 1212,535 L1240,585 L1275,628" fill="none" stroke="#163640" stroke-width="1" />
</svg>
</body></html>
